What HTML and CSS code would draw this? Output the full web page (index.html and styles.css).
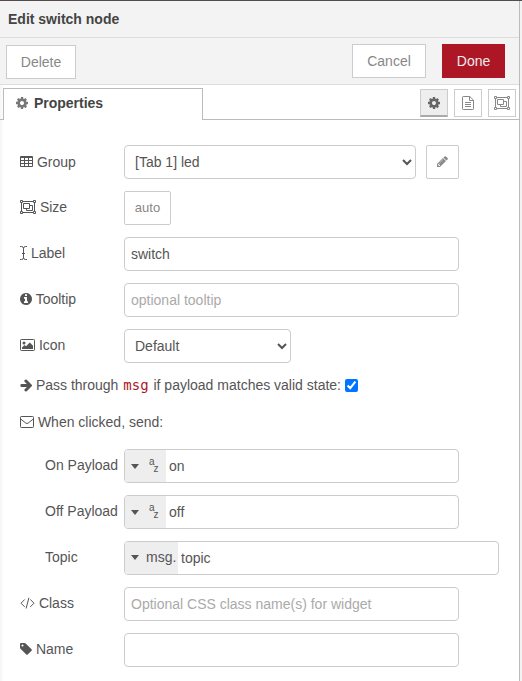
FILE: index.html
```
<!DOCTYPE html>
<html lang="en">
<head>
<meta charset="utf-8">
<title>Edit switch node</title>
<link rel="stylesheet" href="styles.css">
</head>
<body>
<svg class="defs" width="0" height="0">
  <symbol id="cog" viewBox="128 0 1536 1792"><path d="M1152 896q0-106-75-181t-181-75-181 75-75 181 75 181 181 75 181-75 75-181zm512-109v222q0 12-8 23t-20 13l-185 28q-19 54-39 91 35 50 107 138 10 12 10 25t-9 23q-27 37-99 108t-94 71q-12 0-26-9l-138-108q-44 23-91 38-16 136-29 186-7 28-36 28h-222q-14 0-24.5-8.5t-11.5-21.5l-28-184q-49-16-90-37l-141 107q-10 9-25 9-14 0-25-11-126-114-165-168-7-10-7-23 0-12 8-23 15-21 51-66.5t54-70.5q-27-50-41-99l-183-27q-13-2-21-12.5t-8-23.5v-222q0-12 8-23t19-13l186-28q14-46 39-92-40-57-107-138-10-12-10-24 0-10 9-23 26-36 98.5-107.5t94.5-71.5q13 0 26 10l138 107q44-23 91-38 16-136 29-186 7-28 36-28h222q14 0 24.5 8.5t11.5 21.5l28 184q49 16 90 37l142-107q9-9 24-9 13 0 25 10 129 119 165 170 7 8 7 22 0 12-8 23-15 21-51 66.5t-54 70.5q26 50 41 98l183 28q13 2 21 12.5t8 23.5z"/></symbol>
  <symbol id="group" viewBox="0 0 16 14"><g fill="none" stroke="currentColor"><path d="M3 1.500h10M3 12.500h10M1.500 3v8M14.500 3v8M.5.500h2v2h-2zM13.500.500h2v2h-2zM.5 11.500h2v2h-2zM13.500 11.500h2v2h-2zM3.500 3.500h6v5h-6zM9.500 5.500h3v5h-6v-2"/></g></symbol>
</svg>
<main class="tray">
  <header class="title">Edit switch node</header>
  <div class="toolbar">
    <button class="btn delete">Delete</button>
    <div class="actions"><button class="btn cancel">Cancel</button><button class="btn done">Done</button></div>
  </div>
  <nav class="tabs">
    <div class="tab"><svg class="icon" width="12" height="14"><use href="#cog"/></svg> Properties</div>
    <div class="tab-buttons">
      <button class="tool active"><svg width="12" height="14"><use href="#cog"/></svg></button>
      <button class="tool"><svg class="outline" width="12" height="14" viewBox="0 0 12 14"><path d="M.5 1.200q0-.7.7-.7h6.600l3.700 3.700v8.600q0 .7-.7.7H1.200q-.7 0-.7-.7zM7.500.5v4h4M3 6.500h6M3 8.500h6M3 10.500h6"/></svg></button>
      <button class="tool"><svg width="16" height="14"><use href="#group"/></svg></button>
    </div>
  </nav>
  <form class="form">
    <div class="row group-row">
      <label><svg class="icon" width="13" height="14" viewBox="0 0 13 14"><path fill-rule="evenodd" d="M1 1h11q1 0 1 1v9q0 1-1 1H1q-1 0-1-1V2q0-1 1-1zM1 3v2h3V3zM5 3v2h3V3zM9 3v2h3V3zM1 6v2h3V6zM5 6v2h3V6zM9 6v2h3V6zM1 9v2h3V9zM5 9v2h3V9zM9 9v2h3V9z"/></svg> Group</label>
      <select class="wide"><option>[Tab 1] led</option></select>
      <button type="button" class="btn edit"><svg width="11" height="13" viewBox="128 0 1536 1792"><path d="M491 1536l91-91-235-235-91 91v107h128v128h107zm523-928q0-22-22-22-10 0-17 7l-542 542q-7 7-7 17 0 22 22 22 10 0 17-7l542-542q7-7 7-17zm-54-192l416 416-832 832h-416v-416zm683 96q0 53-37 90l-166 166-416-416 166-165q36-38 90-38 53 0 91 38l235 234q37 39 37 91z"/></svg></button>
    </div>
    <div class="row">
      <label><svg class="icon" width="16" height="14"><use href="#group"/></svg> Size</label>
      <button type="button" class="btn auto">auto</button>
    </div>
    <div class="row">
      <label><svg class="icon outline" width="7" height="14" viewBox="0 0 7 14"><path d="M0 .5h1.500q2 0 2 2v9q0 2-2 2H0M7 .5H5.500q-2 0-2 2v9q0 2 2 2H7M2 7.500h3"/></svg> Label</label>
      <input type="text" value="switch">
    </div>
    <div class="row">
      <label><svg class="icon" width="12" height="14" viewBox="128 0 1536 1792"><path d="M1152 1376v-160q0-14-9-23t-23-9h-96v-512q0-14-9-23t-23-9h-320q-14 0-23 9t-9 23v160q0 14 9 23t23 9h96v320h-96q-14 0-23 9t-9 23v160q0 14 9 23t23 9h448q14 0 23-9t9-23zm-128-896v-160q0-14-9-23t-23-9h-192q-14 0-23 9t-9 23v160q0 14 9 23t23 9h192q14 0 23-9t9-23zm640 416q0 209-103 385.500t-279.500 279.500-385.500 103-385.500-103-279.500-279.500-103-385.500 103-385.500 279.500-279.500 385.500-103 385.500 103 279.500 279.500 103 385.500z"/></svg> Tooltip</label>
      <input type="text" placeholder="optional tooltip">
    </div>
    <div class="row">
      <label><svg class="icon" width="15" height="14" viewBox="0 0 15 14"><rect class="outline" x=".5" y="1.500" width="14" height="11" rx=".8"/><circle cx="4" cy="5" r="1.500"/><path d="M2 11V9.500L4.500 7 6 8.300 9.800 4.500 13 7.700V11z"/></svg> Icon</label>
      <select class="narrow"><option>Default</option></select>
    </div>
    <div class="line pass">
      <svg class="icon" width="12" height="14" viewBox="64 0 1536 1792"><path d="M1600 960q0 54-37 91l-651 651q-39 37-91 37-51 0-90-37l-75-75q-38-38-38-91t38-91l293-293h-704q-52 0-84.500-37.500t-32.500-90.500v-128q0-53 32.500-90.500t84.500-37.500h704l-293-294q-38-36-38-90t38-90l75-75q38-38 90-38 53 0 91 38l651 651q37 35 37 90z"/></svg> Pass through <code>msg</code> if payload matches valid state: <input type="checkbox" checked>
    </div>
    <div class="line send">
      <svg class="icon outline" width="14" height="14" viewBox="0 0 14 14"><rect x=".5" y="1.500" width="13" height="11" rx=".8"/><path d="M.7 4l5 4q1.300 1 2.600 0l5-4"/></svg> When clicked, send:
    </div>
    <div class="row sub">
      <label>On Payload</label>
      <div class="typed"><span class="type"><i class="caret"></i><span class="az"><b>a</b><b>z</b></span></span><input type="text" value="on"></div>
    </div>
    <div class="row sub">
      <label>Off Payload</label>
      <div class="typed"><span class="type"><i class="caret"></i><span class="az"><b>a</b><b>z</b></span></span><input type="text" value="off"></div>
    </div>
    <div class="row sub">
      <label>Topic</label>
      <div class="typed topic"><span class="type msg"><i class="caret"></i>msg.</span><input type="text" value="topic"></div>
    </div>
    <div class="row">
      <label><svg class="icon outline" width="15" height="14" viewBox="0 0 15 14"><path d="M4.700 3.500L1 7.200l3.700 3.700M10.300 3.500L14 7.200l-3.700 3.700M8.900 1.800L6.100 12.500"/></svg> Class</label>
      <input type="text" placeholder="Optional CSS class name(s) for widget">
    </div>
    <div class="row">
      <label><svg class="icon" width="12" height="14" viewBox="128 0 1536 1792"><path d="M576 448q0-53-37.500-90.500t-90.500-37.500-90.500 37.500-37.500 90.500 37.500 90.500 90.500 37.500 90.500-37.500 37.500-90.500zm1067 576q0 53-37 90l-491 492q-39 37-91 37-53 0-90-37l-715-716q-38-37-64.500-101t-26.500-117v-416q0-52 38-90t90-38h416q53 0 117 26.500t102 64.500l715 714q37 39 37 91z"/></svg> Name</label>
      <input type="text">
    </div>
  </form>
</main>
</body>
</html>
```
FILE: styles.css
```
* { box-sizing: border-box; }
body {
  margin: 0;
  height: 681px;
  overflow: hidden;
  background: #f3f3f3;
  border-top: 1px solid #524c4f;
  font: 14px/20px "Liberation Sans", Arial, sans-serif;
  color: #555;
}
.defs { display: block; }
svg { fill: currentColor; }
.outline { fill: none; stroke: currentColor; }
.tray {
  width: 520px;
  height: 680px;
  background: linear-gradient(to right, #f5f5f5, #fff 4px);
  border-right: 1px solid #bbb;
}
.title {
  height: 37px;
  padding-left: 8px;
  line-height: 36px;
  font-weight: bold;
  color: #444;
  background: #f3f3f3;
  border-bottom: 1px solid #ddd;
}
.toolbar {
  display: flex;
  justify-content: space-between;
  height: 47px;
  padding: 6px 14px 0 6px;
  background: #f3f3f3;
  border-bottom: 1px solid #ddd;
}
.actions { display: flex; gap: 16px; }
button, input, select { font: inherit; color: inherit; margin: 0; }
.btn {
  height: 34px;
  padding: 0;
  background: #fff;
  border: 1px solid #ccc;
  color: #888;
}
.delete { width: 70px; margin-top: 1px; }
.cancel { width: 74px; }
.done { width: 63px; background: #ad1625; border-color: #ad1625; color: #eee; }
.tabs {
  display: flex;
  justify-content: space-between;
  height: 35px;
  padding: 3px 3px 0;
  background: linear-gradient(#bbb, #bbb) bottom / 100% 1px no-repeat;
}
.tab {
  width: 200px;
  height: 32px;
  padding-left: 12px;
  line-height: 29px;
  font-weight: bold;
  color: #444;
  background: #fff;
  border: 1px solid #bbb;
  border-bottom: 0;
}
.tab .icon { color: #777; margin-right: 2px; }
.tab-buttons { display: flex; gap: 6px; padding-top: 1px; }
.tool {
  display: flex;
  align-items: center;
  justify-content: center;
  width: 28px;
  height: 28px;
  padding: 0;
  background: #fff;
  border: 1px solid #ccc;
  color: #888;
}
.active { background: #eee; border-bottom: 2px solid #aaa; color: #666; }
.icon { vertical-align: -2px; }
.form { padding: 25px 20px 0; }
.row { display: flex; height: 34px; margin-bottom: 12px; }
.row label { flex: none; width: 104px; line-height: 32px; white-space: nowrap; }
.group-row label { line-height: 34px; }
.row select, .row > input, .typed {
  height: 34px;
  background: #fff;
  border: 1px solid #ccc;
  border-radius: 4px;
}
.row > input, .typed { width: 335px; }
.row > input { padding: 0 6px; }
.wide { width: 292px; padding: 0 6px; }
.narrow { width: 167px; padding: 0 6px; }
.edit { width: 33px; margin-left: 10px; border-radius: 2px; line-height: 30px; }
.edit svg { vertical-align: -1px; }
.auto { width: 47px; border-radius: 2px; font-size: 13px; }
::placeholder { color: #aaa; opacity: 1; }
.line { height: 20px; white-space: nowrap; }
.pass { margin-bottom: 17px; }
.pass input { width: 13px; height: 13px; vertical-align: -2px; }
.send { margin-bottom: 17px; }
code { font: 14px/18px "DejaVu Sans Mono", monospace; color: #ad1625; padding: 0 1px; }
.sub label { width: 79px; }
.sub { padding-left: 25px; }
.typed { display: flex; overflow: hidden; }
.row .topic { width: 375px; }
.typed input { flex: 1; min-width: 0; padding: 0 3px; border: 0; background: none; }
.type {
  display: flex;
  align-items: center;
  width: 41px;
  padding-left: 6px;
  background: #eee;
}
.msg { width: 53px; line-height: 30px; padding-bottom: 2px; }
.caret {
  width: 8px;
  margin: 0 7px 0 0;
  border: 4px solid transparent;
  border-top: 5px solid #555;
  border-bottom: 0;
}
.az { display: flex; height: 20px; padding-left: 3px; }
.az b { font: 10px/12px "Liberation Sans", sans-serif; }
.az b + b { margin: 7px 0 0 -1px; }
```
